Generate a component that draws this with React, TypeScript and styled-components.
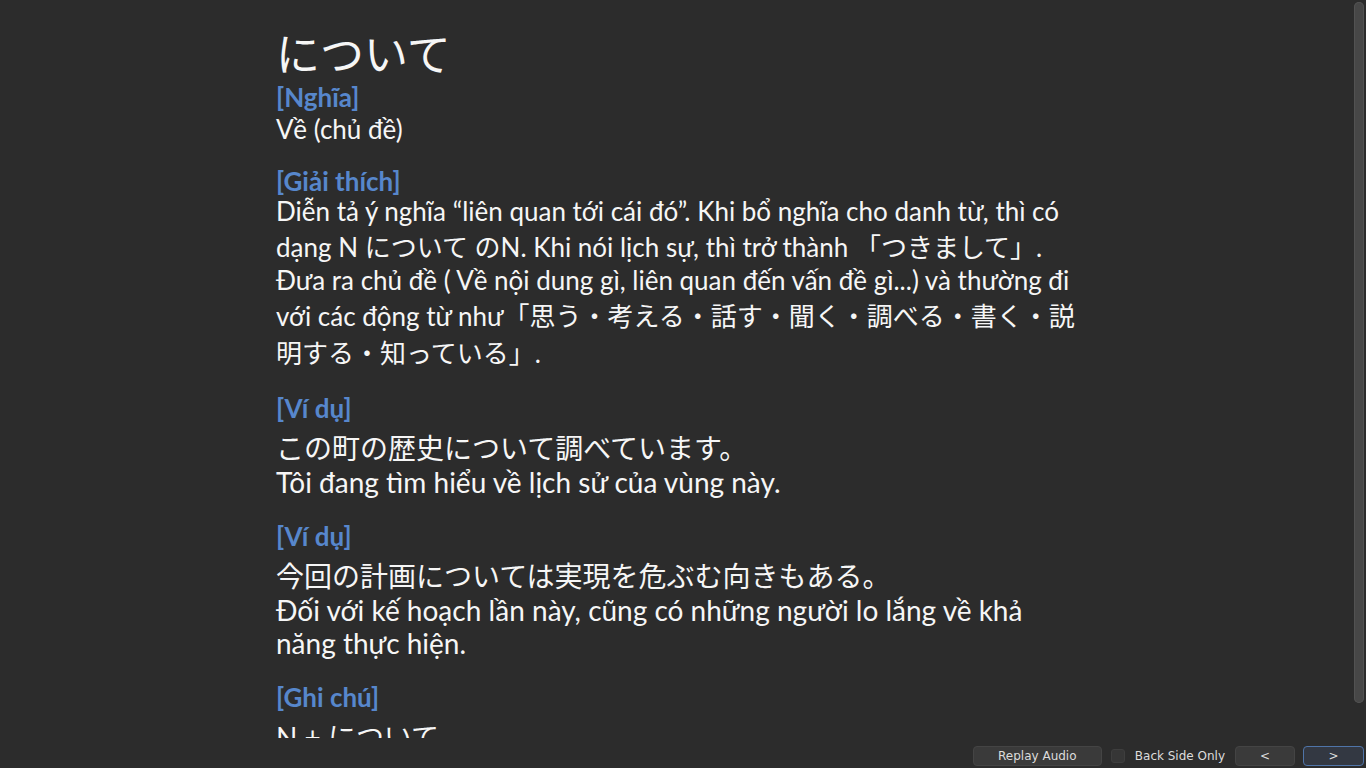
import { FC } from 'react';
import styled, { createGlobalStyle } from 'styled-components';

const GlobalStyle = createGlobalStyle`
	html, body {
		margin: 0;
		padding: 0;
		height: 100%;
		background: #2c2c2c;
		overflow: hidden;
	}
	#root {
		height: 100%;
	}
`;

const Page = styled.div`
	height: 100vh;
	display: flex;
	flex-direction: column;
	background: #2c2c2c;
`;

const Main = styled.div`
	flex: 1;
	min-height: 0;
	display: flex;
`;

const Scroller = styled.div`
	flex: 1;
	min-width: 0;
	overflow: hidden;
`;

const ScrollTrack = styled.div`
	width: 14px;
	padding: 2px;
	box-sizing: border-box;
	background: #2c2c2c;
`;

const ScrollThumb = styled.div`
	height: 701px;
	border-radius: 5px;
	background: #474747;
	box-shadow: inset 0 0 0 1px #525252;
`;

const Card = styled.div`
	max-width: 800px;
	margin: 0 auto;
	padding: 23px 0 14px;
	font-family: Lato, 'Noto Sans CJK JP', sans-serif;
	font-size: 26px;
	color: #f6f6f6;
`;

const Title = styled.div`
	font-family: 'Noto Sans CJK JP', sans-serif;
	font-size: 44px;
	line-height: 58px;
`;

const Section = styled.div<{ $gap?: number }>`
	margin-bottom: ${(p) => p.$gap ?? 20}px;
`;

const Label = styled.div`
	font-weight: 700;
	color: #5787cc;
`;

const Text = styled.div<{ $shift?: number }>`
	margin-top: ${(p) => p.$shift ?? 0}px;
`;

const Example = styled.div`
	font-size: 28px;
`;

const Jp = styled.div`
	margin-top: 6px;
	line-height: 36px;
`;

const Vn = styled.div`
	line-height: 1.2;
`;

const BottomBar = styled.div`
	height: 30px;
	box-sizing: border-box;
	padding: 8px 2px 0 0;
	display: flex;
	justify-content: flex-end;
	align-items: flex-start;
	font-family: 'DejaVu Sans', sans-serif;
	font-size: 12px;
	color: #dcdcdc;
`;

const Button = styled.button<{ $width: number; $focused?: boolean }>`
	width: ${(p) => p.$width}px;
	height: 20px;
	margin-left: ${(p) => (p.$focused ? 8 : 10)}px;
	padding: 0;
	box-sizing: border-box;
	background: ${(p) => (p.$focused ? '#333842' : '#3a3a3a')};
	border: 1px solid ${(p) => (p.$focused ? '#4f74a8' : '#444444')};
	border-radius: 4px;
	font-family: inherit;
	font-size: 12px;
	color: #dcdcdc;

	&:first-child {
		margin-left: 0;
	}
`;

const CheckRow = styled.label`
	display: flex;
	align-items: center;
	height: 20px;
	margin-left: 9px;
	gap: 10px;
`;

const CheckBox = styled.span`
	width: 14px;
	height: 14px;
	box-sizing: border-box;
	border-radius: 3px;
	background: #363636;
	border: 1px solid #3e3e3e;
`;

const App: FC = () => {
	return (
		<Page>
			<GlobalStyle />
			<Main>
				<Scroller>
					<Card>
						<Title>について</Title>
						<Section>
							<Label>[Nghĩa]</Label>
							<Text>Về (chủ đề)</Text>
						</Section>
						<Section $gap={22}>
							<Label>[Giải thích]</Label>
							<Text $shift={-2}>
								Diễn tả ý nghĩa “liên quan tới cái đó”. Khi bổ nghĩa cho danh từ, thì có dạng N について のN. Khi
								nói lịch sự, thì trở thành 「つきまして」.
								<br />
								Đưa ra chủ đề ( Về nội dung gì, liên quan đến vấn đề gì...) và thường đi với các động từ
								như「思う・考える・話す・聞く・調べる・書く・説明する・知っている」.
							</Text>
						</Section>
						<Section>
							<Label>[Ví dụ]</Label>
							<Example>
								<Jp>この町の歴史について調べています。</Jp>
								<Vn>Tôi đang tìm hiểu về lịch sử của vùng này.</Vn>
							</Example>
						</Section>
						<Section>
							<Label>[Ví dụ]</Label>
							<Example>
								<Jp>今回の計画については実現を危ぶむ向きもある。</Jp>
								<Vn>Đối với kế hoạch lần này, cũng có những người lo lắng về khả năng thực hiện.</Vn>
							</Example>
						</Section>
						<Section $gap={0}>
							<Label>[Ghi chú]</Label>
							<Example>
								<Jp>N + について</Jp>
							</Example>
						</Section>
					</Card>
				</Scroller>
				<ScrollTrack>
					<ScrollThumb />
				</ScrollTrack>
			</Main>
			<BottomBar>
				<Button $width={129}>Replay Audio</Button>
				<CheckRow>
					<CheckBox />
					Back Side Only
				</CheckRow>
				<Button $width={60}>&lt;</Button>
				<Button $width={61} $focused>
					&gt;
				</Button>
			</BottomBar>
		</Page>
	);
};

export default App;
